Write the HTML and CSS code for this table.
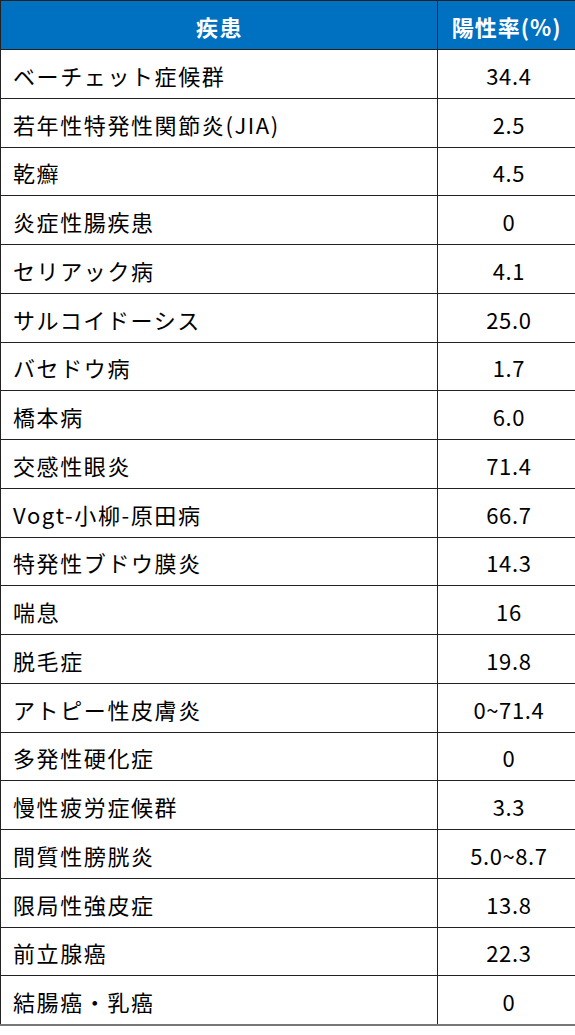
FILE: index.html
```html
<!DOCTYPE html>
<html lang="ja">
<head>
<meta charset="utf-8">
<link rel="stylesheet" href="styles.css">
</head>
<body>
<table class="tbl">
<thead>
<tr class="hrow"><th class="c1">疾患</th><th class="c2">陽性率(%)</th></tr>
</thead>
<tbody>
<tr><td>ベーチェット症候群</td><td class="num">34.4</td></tr>
<tr><td>若年性特発性関節炎(JIA)</td><td class="num">2.5</td></tr>
<tr><td>乾癬</td><td class="num">4.5</td></tr>
<tr><td>炎症性腸疾患</td><td class="num">0</td></tr>
<tr><td>セリアック病</td><td class="num">4.1</td></tr>
<tr><td>サルコイドーシス</td><td class="num">25.0</td></tr>
<tr><td>バセドウ病</td><td class="num">1.7</td></tr>
<tr><td>橋本病</td><td class="num">6.0</td></tr>
<tr><td>交感性眼炎</td><td class="num">71.4</td></tr>
<tr><td>Vogt-小柳-原田病</td><td class="num">66.7</td></tr>
<tr><td>特発性ブドウ膜炎</td><td class="num">14.3</td></tr>
<tr><td>喘息</td><td class="num">16</td></tr>
<tr><td>脱毛症</td><td class="num">19.8</td></tr>
<tr><td>アトピー性皮膚炎</td><td class="num">0~71.4</td></tr>
<tr><td>多発性硬化症</td><td class="num">0</td></tr>
<tr><td>慢性疲労症候群</td><td class="num">3.3</td></tr>
<tr><td>間質性膀胱炎</td><td class="num">5.0~8.7</td></tr>
<tr><td>限局性強皮症</td><td class="num">13.8</td></tr>
<tr><td>前立腺癌</td><td class="num">22.3</td></tr>
<tr><td>結腸癌・乳癌</td><td class="num">0</td></tr>
</tbody>
</table>
</body>
</html>
```
FILE: styles.css
```css
html, body {
  margin: 0;
  padding: 0;
  background: #ffffff;
}
.tbl {
  border-collapse: collapse;
  width: 574px;
  table-layout: fixed;
  font-family: "Noto Sans CJK JP", "Noto Sans", sans-serif;
  font-size: 22px;
  letter-spacing: 1.6px;
  color: #000;
}
.tbl tr {
  height: 48.75px;
}
.tbl tr.hrow {
  height: 49px;
}
.tbl th, .tbl td {
  border: 1px solid #222;
  padding: 2px 0 0 0;
  line-height: 1;
  vertical-align: middle;
}
.tbl th {
  background: #0070c0;
  color: #fff;
  font-weight: bold;
  text-align: center;
  padding-left: 1.6px;
}
.tbl th.c2 {
  letter-spacing: 1px;
  padding-left: 0;
  padding-right: 4px;
}
.c1 { width: 434px; }
.c2 { width: 138px; }
.tbl td {
  padding-left: 12px;
  text-align: left;
}
.tbl td.num {
  text-align: center;
  letter-spacing: 0.6px;
  padding-left: 0.6px;
}
.tbl tbody tr:last-child td {
  border-bottom: 2px solid #777;
}
```
